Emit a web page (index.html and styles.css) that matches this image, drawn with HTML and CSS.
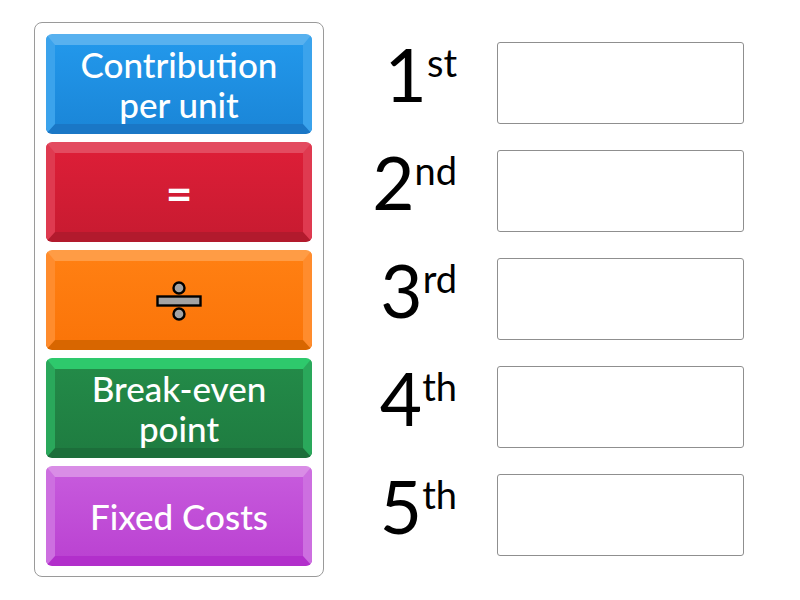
FILE: index.html
```html
<!DOCTYPE html>
<html>
<head>
<meta charset="utf-8">
<link rel="stylesheet" href="styles.css">
</head>
<body>
<div class="page">
  <div class="bank">
    <div class="tile blue"><span class="txt">Contribution<br>per unit</span></div>
    <div class="tile red"><span class="txt eq">=</span></div>
    <div class="tile orange">
      <svg class="div-icon" width="48" height="40" viewBox="0 0 48 40">
        <circle cx="24" cy="7" r="5.5" fill="#a3a3a3" stroke="#000" stroke-width="2.4"/>
        <rect x="2.5" y="15.5" width="43" height="9" fill="#a3a3a3" stroke="#000" stroke-width="2.4"/>
        <circle cx="24" cy="33" r="5.5" fill="#a3a3a3" stroke="#000" stroke-width="2.4"/>
      </svg>
    </div>
    <div class="tile green"><span class="txt">Break-even<br>point</span></div>
    <div class="tile purple"><span class="txt">Fixed Costs</span></div>
  </div>
  <div class="slots">
    <div class="row"><div class="label">1<sup>st</sup></div><div class="box"></div></div>
    <div class="row"><div class="label">2<sup>nd</sup></div><div class="box"></div></div>
    <div class="row"><div class="label">3<sup>rd</sup></div><div class="box"></div></div>
    <div class="row"><div class="label">4<sup>th</sup></div><div class="box"></div></div>
    <div class="row"><div class="label">5<sup>th</sup></div><div class="box"></div></div>
  </div>
</div>
</body>
</html>
```

FILE: styles.css
```css
html, body {
  margin: 0;
  padding: 0;
  background: #fff;
  font-family: "Lato", "Open Sans", sans-serif;
}

.page {
  display: flex;
  align-items: flex-start;
  padding: 22px 0 0 34px;
}

.bank {
  width: 266px;
  padding: 11px 11px 10px 11px;
  border: 1.5px solid #9a9a9a;
  border-radius: 8px;
  display: flex;
  flex-direction: column;
  gap: 8px;
}

.tile {
  height: 100px;
  border-radius: 6px;
  display: flex;
  align-items: center;
  justify-content: center;
  text-align: center;
  color: #fff;
  box-sizing: border-box;
  border-style: solid;
  border-width: 11px 9px 10px 9px;
}

.txt {
  font-size: 35px;
  line-height: 40px;
  font-weight: 500;
  margin-top: -2px;
}

.txt.eq {
  font-size: 46px;
  font-weight: 700;
  margin-top: 0;
}

.blue {
  background: linear-gradient(#2297ea, #1b87d9);
  border-color: #58b1ef #3ba3ec #1a77c6 #3ba3ec;
}
.red {
  background: linear-gradient(#dc1e37, #c91b31);
  border-color: #e34b60 #df3a50 #b21a2d #df3a50;
}
.orange {
  background: linear-gradient(#ff7f12, #fb7509);
  border-color: #ff9c45 #ff8c2d #d86600 #ff8c2d;
}
.green {
  background: linear-gradient(#238a48, #1f7d41);
  border-color: #2ec96c #2aa85b #1c6e3a #2aa85b;
}
.purple {
  background: linear-gradient(#c659dc, #bb43d2);
  border-color: #d98de6 #cd6fe0 #b22fcb #cd6fe0;
}

.div-icon {
  display: block;
}

.slots {
  margin-left: 41px;
  padding-top: 20px;
  display: flex;
  flex-direction: column;
  gap: 26px;
}

.row {
  display: flex;
  align-items: flex-start;
  height: 82px;
}

.label {
  width: 92px;
  text-align: right;
  font-size: 73px;
  line-height: 82px;
  color: #000;
  margin-top: -9px;
}

.label sup {
  font-size: 38px;
  vertical-align: top;
  line-height: 1;
  position: relative;
  top: 10px;
}

.box {
  margin-left: 40px;
  width: 247px;
  height: 82px;
  box-sizing: border-box;
  border: 1.5px solid #8f8f8f;
  border-radius: 3px;
}
```
